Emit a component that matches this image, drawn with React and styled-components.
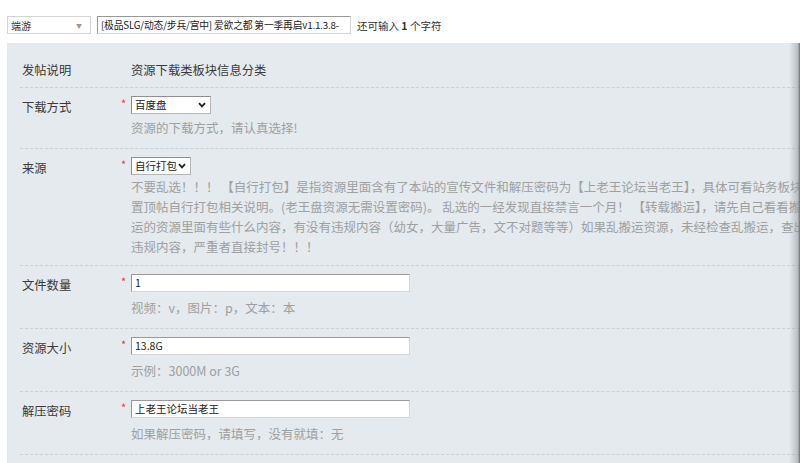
import React from "react";
import styled, { createGlobalStyle } from "styled-components";

const Global = createGlobalStyle`
  html, body { margin: 0; padding: 0; background: #fff; }
  body {
    font-family: "Noto Sans CJK SC", "Noto Sans", sans-serif;
    color: #333;
    overflow: hidden;
  }
`;

const Page = styled.div`
  width: 800px;
  height: 463px;
  overflow: hidden;
`;

const TopBar = styled.div`
  display: flex;
  align-items: center;
  gap: 6px;
  padding: 16px 0 0 7px;
  height: 18px;
`;

const TypeSelect = styled.div`
  box-sizing: border-box;
  width: 84px;
  height: 18px;
  border: 1px solid #d4d4d4;
  background: #fff;
  display: flex;
  align-items: center;
  justify-content: space-between;
  padding: 0 8px 0 3px;
  font-size: 10px;
  color: #333;
`;

const SmallArrow = styled.span`
  font-size: 6px;
  color: #999;
`;

const TextInput = styled.div`
  box-sizing: border-box;
  width: ${(p) => p.$w}px;
  height: 18px;
  background: #fff;
  border: 1px solid;
  border-color: #999 #d6d6d6 #d6d6d6 #999;
  display: flex;
  align-items: center;
  padding: 0 3px;
  font-size: ${(p) => p.$fs ?? 10.5}px;
  letter-spacing: ${(p) => p.$ls ?? 0}px;
  color: #222;
  white-space: nowrap;
  overflow: hidden;
`;

const Counter = styled.span`
  font-size: 10.5px;
  color: #333;
  white-space: nowrap;
  b { font-weight: 700; }
`;

const Panel = styled.div`
  position: relative;
  margin: 9px 0 0 7px;
  height: 420px;
  background: #e4eaee;
  padding: 10px 0 0 13px;
  box-sizing: border-box;
  overflow: hidden;
`;

const EdgeShade = styled.div`
  position: absolute;
  top: 0;
  right: 0;
  bottom: 0;
  width: 11px;
  background: linear-gradient(to right, rgba(228, 234, 238, 0), rgba(150, 155, 160, 0.55) 80%, #6b6f73 100%);
`;

const Row = styled.div`
  display: grid;
  grid-template-columns: 100px 11px 1fr;
  align-items: ${(p) => (p.$compact ? "center" : "start")};
  height: ${(p) => (p.$compact ? "34px" : "auto")};
  padding: ${(p) => (p.$compact ? "0" : `8px 0 ${p.$pb ?? 10}px 0`)};
  border-bottom: 1px dashed #c9d1d7;
`;

const Label = styled.div`
  padding: ${(p) => (p.$compact ? "0" : "2px")} 0 0 2px;
  font-size: 12.3px;
  line-height: 18px;
  color: #3a3a3a;
  white-space: nowrap;
`;

const Star = styled.span`
  color: #e53935;
  font-size: 11px;
  line-height: 14px;
  padding-left: 1px;
`;

const Content = styled.div`
  display: flex;
  flex-direction: column;
  align-items: flex-start;
  font-size: 12.3px;
  color: #3a3a3a;
  line-height: 18px;
  min-width: 0;
`;

const FakeSelect = styled.div`
  box-sizing: border-box;
  width: ${(p) => p.$w}px;
  height: 18px;
  background: #fff;
  border: 1px solid;
  border-color: #8f8f8f #b5b5b5 #b5b5b5 #8f8f8f;
  display: flex;
  align-items: center;
  justify-content: space-between;
  padding: 0 4px 0 3px;
  font-size: 10.5px;
  color: #222;
`;

const Hint = styled.div`
  margin-top: ${(p) => p.$mt ?? 5}px;
  font-size: 12.5px;
  line-height: ${(p) => p.$lh ?? 21}px;
  color: #a0a0a0;
  white-space: nowrap;
`;

const Chevron = () => (
  <svg width="8" height="6" viewBox="0 0 8 6">
    <polyline points="1,1.2 4,4.4 7,1.2" fill="none" stroke="#222" strokeWidth="1.8" />
  </svg>
);

export default function App() {
  return (
    <Page>
      <Global />
      <TopBar>
        <TypeSelect>
          端游
          <SmallArrow>▼</SmallArrow>
        </TypeSelect>
        <TextInput $w={254} $fs={9.8} $ls={-0.2}>
          [极品SLG/动态/步兵/宫中] 爱欲之都 第一季再启v1.1.3.8-
        </TextInput>
        <Counter>
          还可输入 <b>1</b> 个字符
        </Counter>
      </TopBar>
      <Panel>
        <Row $compact>
          <Label $compact>发帖说明</Label>
          <span />
          <Content>资源下载类板块信息分类</Content>
        </Row>
        <Row $pb={10}>
          <Label>下载方式</Label>
          <Star>*</Star>
          <Content>
            <FakeSelect $w={80}>
              百度盘
              <Chevron />
            </FakeSelect>
            <Hint $mt={3}>资源的下载方式，请认真选择!</Hint>
          </Content>
        </Row>
        <Row $pb={8}>
          <Label>来源</Label>
          <Star>*</Star>
          <Content>
            <FakeSelect $w={60}>
              自行打包
              <Chevron />
            </FakeSelect>
            <Hint $mt={2} $lh={20}>
              不要乱选！！！ 【自行打包】是指资源里面含有了本站的宣传文件和解压密码为【上老王论坛当老王】，具体可看站务板块
              <br />
              置顶帖自行打包相关说明。(老王盘资源无需设置密码)。 乱选的一经发现直接禁言一个月！ 【转载搬运】，请先自己看看搬
              <br />
              运的资源里面有些什么内容，有没有违规内容（幼女，大量广告，文不对题等等）如果乱搬运资源，未经检查乱搬运，查出有
              <br />
              违规内容，严重者直接封号！！！
            </Hint>
          </Content>
        </Row>
        <Row>
          <Label>文件数量</Label>
          <Star>*</Star>
          <Content>
            <TextInput $w={279}>1</TextInput>
            <Hint>视频：v，图片：p，文本：本</Hint>
          </Content>
        </Row>
        <Row>
          <Label>资源大小</Label>
          <Star>*</Star>
          <Content>
            <TextInput $w={279}>13.8G</TextInput>
            <Hint>示例：3000M or 3G</Hint>
          </Content>
        </Row>
        <Row>
          <Label>解压密码</Label>
          <Star>*</Star>
          <Content>
            <TextInput $w={279}>上老王论坛当老王</TextInput>
            <Hint>如果解压密码，请填写，没有就填：无</Hint>
          </Content>
        </Row>
        <EdgeShade />
      </Panel>
    </Page>
  );
}
